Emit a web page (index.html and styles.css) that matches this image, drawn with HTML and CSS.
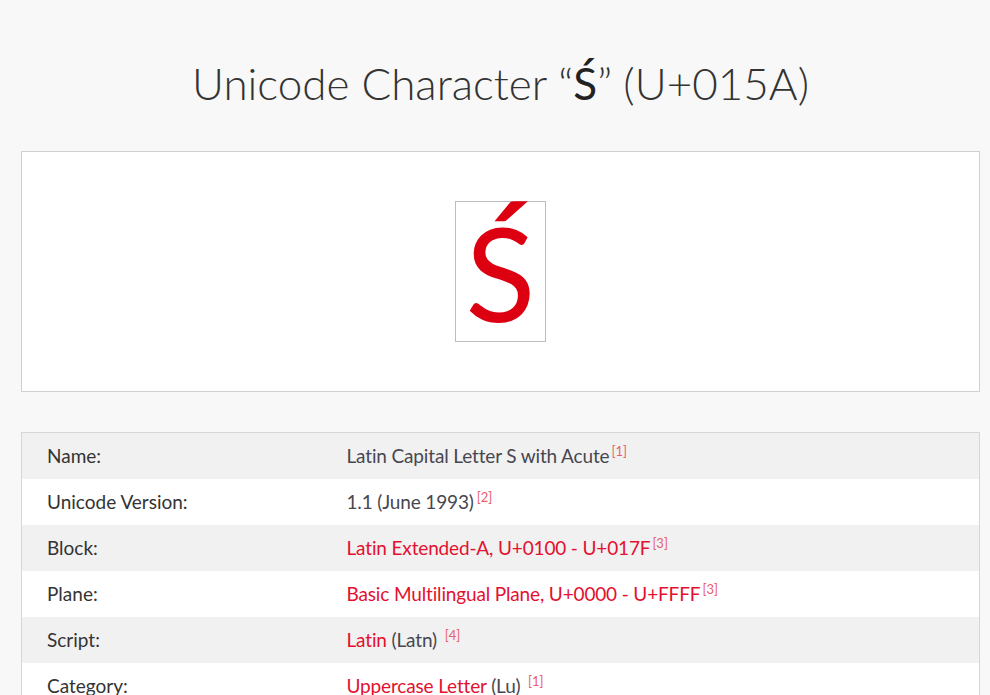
FILE: index.html
```html
<!DOCTYPE html>
<html lang="en">
<head>
<meta charset="utf-8">
<title>Unicode Character “Ś” (U+015A)</title>
<link rel="stylesheet" href="styles.css">
</head>
<body>
<main class="page">
  <h1 class="title">Unicode Character “<span class="title-char">Ś</span>” (U+015A)</h1>
  <section class="preview">
    <div class="glyph-box"><span class="glyph">Ś</span></div>
  </section>
  <table class="props">
    <colgroup><col class="label-col"><col></colgroup>
    <tr class="odd"><th>Name:</th><td>Latin Capital Letter S with Acute<sup>[1]</sup></td></tr>
    <tr><th>Unicode Version:</th><td>1.1 (June 1993)<sup class="sp">[2]</sup></td></tr>
    <tr class="odd"><th>Block:</th><td><a href="#">Latin Extended-A, U+0100 - U+017F</a><sup>[3]</sup></td></tr>
    <tr><th>Plane:</th><td><a href="#">Basic Multilingual Plane, U+0000 - U+FFFF</a><sup>[3]</sup></td></tr>
    <tr class="odd"><th>Script:</th><td><a href="#">Latin</a> (Latn) <sup class="sp">[4]</sup></td></tr>
    <tr><th>Category:</th><td><a href="#">Uppercase Letter</a> (Lu) <sup class="sp">[1]</sup></td></tr>
  </table>
</main>
</body>
</html>
```
FILE: styles.css
```css
html, body {
  margin: 0;
  padding: 0;
  background: #f8f8f8;
}
body {
  font-family: Lato, "Open Sans", sans-serif;
  color: #444;
}
.page {
  width: 959px;
  margin-left: 21px;
  padding-top: 46px;
}
.title {
  margin: 0;
  text-align: center;
  font-weight: 300;
  font-size: 44px;
  line-height: 74px;
  color: #333;
}
.title-char {
  font-weight: 400;
  color: #222;
}
.preview {
  margin-top: 31px;
  background: #fff;
  border: 1px solid #d0d0d0;
  padding: 49px 0;
  display: flex;
  justify-content: center;
}
.glyph-box {
  width: 89px;
  height: 139px;
  border: 1px solid #bdbdbd;
  display: flex;
  align-items: center;
  justify-content: center;
}
.glyph {
  font-size: 129px;
  line-height: 1;
  color: #dd0011;
  margin-top: 2px;
}
.props {
  margin-top: 40px;
  width: 100%;
  table-layout: fixed;
  border-collapse: collapse;
  border: 1px solid #d6d6d6;
  background: #fff;
  font-size: 19px;
}
.label-col {
  width: 325px;
}
.props tr {
  height: 46px;
}
.props tr.odd {
  background: #f1f1f1;
}
.props th {
  text-align: left;
  font-weight: 400;
  color: #333;
  padding: 0 0 0 25px;
  vertical-align: middle;
}
.props td {
  padding: 0;
  vertical-align: middle;
  color: #474750;
  letter-spacing: -0.15px;
}
.props a {
  color: #e3102f;
  text-decoration: none;
}
.props sup {
  font-size: 13px;
  color: #e8606c;
  margin-left: 2px;
  vertical-align: 7px;
  line-height: 0;
  letter-spacing: 0;
}
.props sup.sp {
  margin-left: 3px;
}
```
